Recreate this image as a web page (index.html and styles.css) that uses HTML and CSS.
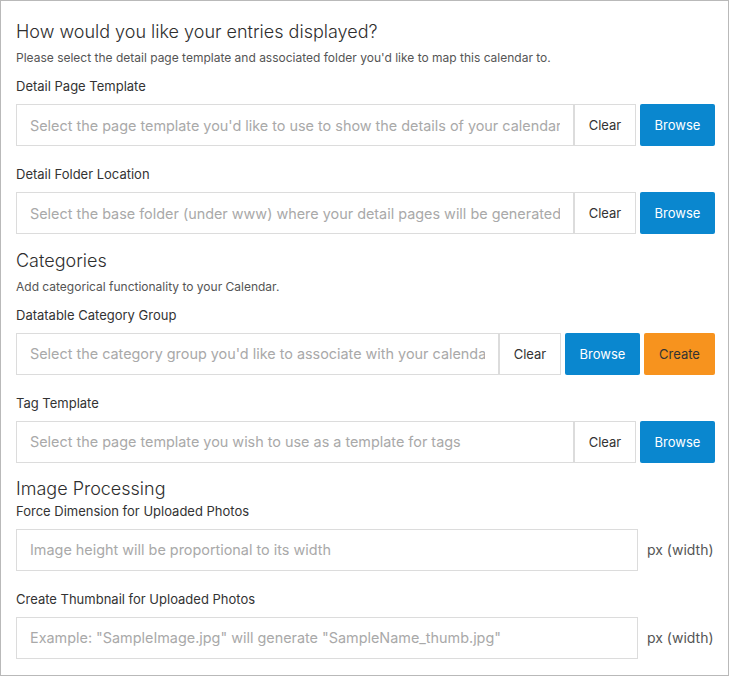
FILE: index.html
```html
<!DOCTYPE html>
<html>
<head>
<meta charset="utf-8">
<link rel="stylesheet" href="styles.css">
</head>
<body>
<div class="panel">
  <h2 class="section-title">How would you like your entries displayed?</h2>
  <p class="section-desc">Please select the detail page template and associated folder you'd like to map this calendar to.</p>

  <div class="form-group">
    <label class="field-label">Detail Page Template</label>
    <div class="field-row">
      <div class="input-group">
        <input class="text-input" type="text" placeholder="Select the page template you'd like to use to show the details of your calendar">
        <button class="btn btn-clear">Clear</button>
      </div>
      <button class="btn btn-browse">Browse</button>
    </div>
  </div>

  <div class="form-group">
    <label class="field-label">Detail Folder Location</label>
    <div class="field-row">
      <div class="input-group">
        <input class="text-input" type="text" placeholder="Select the base folder (under www) where your detail pages will be generated">
        <button class="btn btn-clear">Clear</button>
      </div>
      <button class="btn btn-browse">Browse</button>
    </div>
  </div>

  <h2 class="section-title section-gap">Categories</h2>
  <p class="section-desc">Add categorical functionality to your Calendar.</p>

  <div class="form-group">
    <label class="field-label">Datatable Category Group</label>
    <div class="field-row">
      <div class="input-group">
        <input class="text-input" type="text" placeholder="Select the category group you'd like to associate with your calendar">
        <button class="btn btn-clear">Clear</button>
      </div>
      <button class="btn btn-browse">Browse</button>
      <button class="btn btn-create">Create</button>
    </div>
  </div>

  <div class="form-group">
    <label class="field-label">Tag Template</label>
    <div class="field-row">
      <div class="input-group">
        <input class="text-input" type="text" placeholder="Select the page template you wish to use as a template for tags">
        <button class="btn btn-clear">Clear</button>
      </div>
      <button class="btn btn-browse">Browse</button>
    </div>
  </div>

  <h2 class="section-title section-gap">Image Processing</h2>

  <div class="form-group tight">
    <label class="field-label">Force Dimension for Uploaded Photos</label>
    <div class="field-row">
      <input class="text-input solo" type="text" placeholder="Image height will be proportional to its width">
      <span class="unit">px (width)</span>
    </div>
  </div>

  <div class="form-group last">
    <label class="field-label">Create Thumbnail for Uploaded Photos</label>
    <div class="field-row">
      <input class="text-input solo" type="text" placeholder="Example: &quot;SampleImage.jpg&quot; will generate &quot;SampleName_thumb.jpg&quot;">
      <span class="unit">px (width)</span>
    </div>
  </div>
</div>
</body>
</html>
```

FILE: styles.css
```css
* { box-sizing: border-box; }
html, body { margin: 0; padding: 0; background: #fff; }
body {
  font-family: Inter, "Noto Sans", sans-serif;
  color: #333;
}
.panel {
  width: 729px;
  height: 676px;
  border: 1px solid #b9b9b9;
  padding: 20px 13px 0 15px;
  overflow: hidden;
}
.section-title {
  margin: 0;
  font-size: 18px;
  line-height: 22px;
  font-weight: 300;
  color: #2e2e2e;
}
.section-gap { margin-top: -3.5px; }
.section-desc {
  margin: 7px 0 0;
  font-size: 12px;
  line-height: 16px;
  color: #555;
}
.form-group { margin-top: 11px; margin-bottom: 19px; }
.section-title + .form-group.tight { margin-top: 1.5px; }
.form-group + .form-group { margin-top: 0; }
.field-label {
  display: block;
  font-size: 13px;
  line-height: 18px;
  color: #333;
  margin-bottom: 9px;
}
.field-row {
  display: flex;
  align-items: stretch;
  height: 42px;
}
.input-group {
  flex: 1;
  display: flex;
  min-width: 0;
}
.text-input {
  flex: 1;
  min-width: 0;
  height: 42px;
  border: 1px solid #dcdcdc;
  padding: 0 13px 0 13px;
  font-family: inherit;
  font-size: 14.4px;
  color: #333;
  outline: none;
  background: #fff;
}
.text-input::placeholder { color: #a9a9a9; opacity: 1; }
.btn {
  font-family: inherit;
  font-size: 13px;
  height: 42px;
  border: none;
  cursor: pointer;
}
.btn-clear {
  width: 62px;
  background: #fff;
  border: 1px solid #dcdcdc;
  color: #333;
}
.btn-browse {
  width: 75px;
  margin-left: 4px;
  background: #0a87cf;
  color: #fff;
  border-radius: 2px;
}
.btn-create {
  width: 71px;
  margin-left: 4px;
  background: #f7931e;
  color: #333;
  border-radius: 2px;
}
.text-input.solo { flex: 1; }
.unit {
  width: 77px;
  padding-left: 9px;
  display: flex;
  align-items: center;
  font-size: 14px;
  color: #555;
}
```
